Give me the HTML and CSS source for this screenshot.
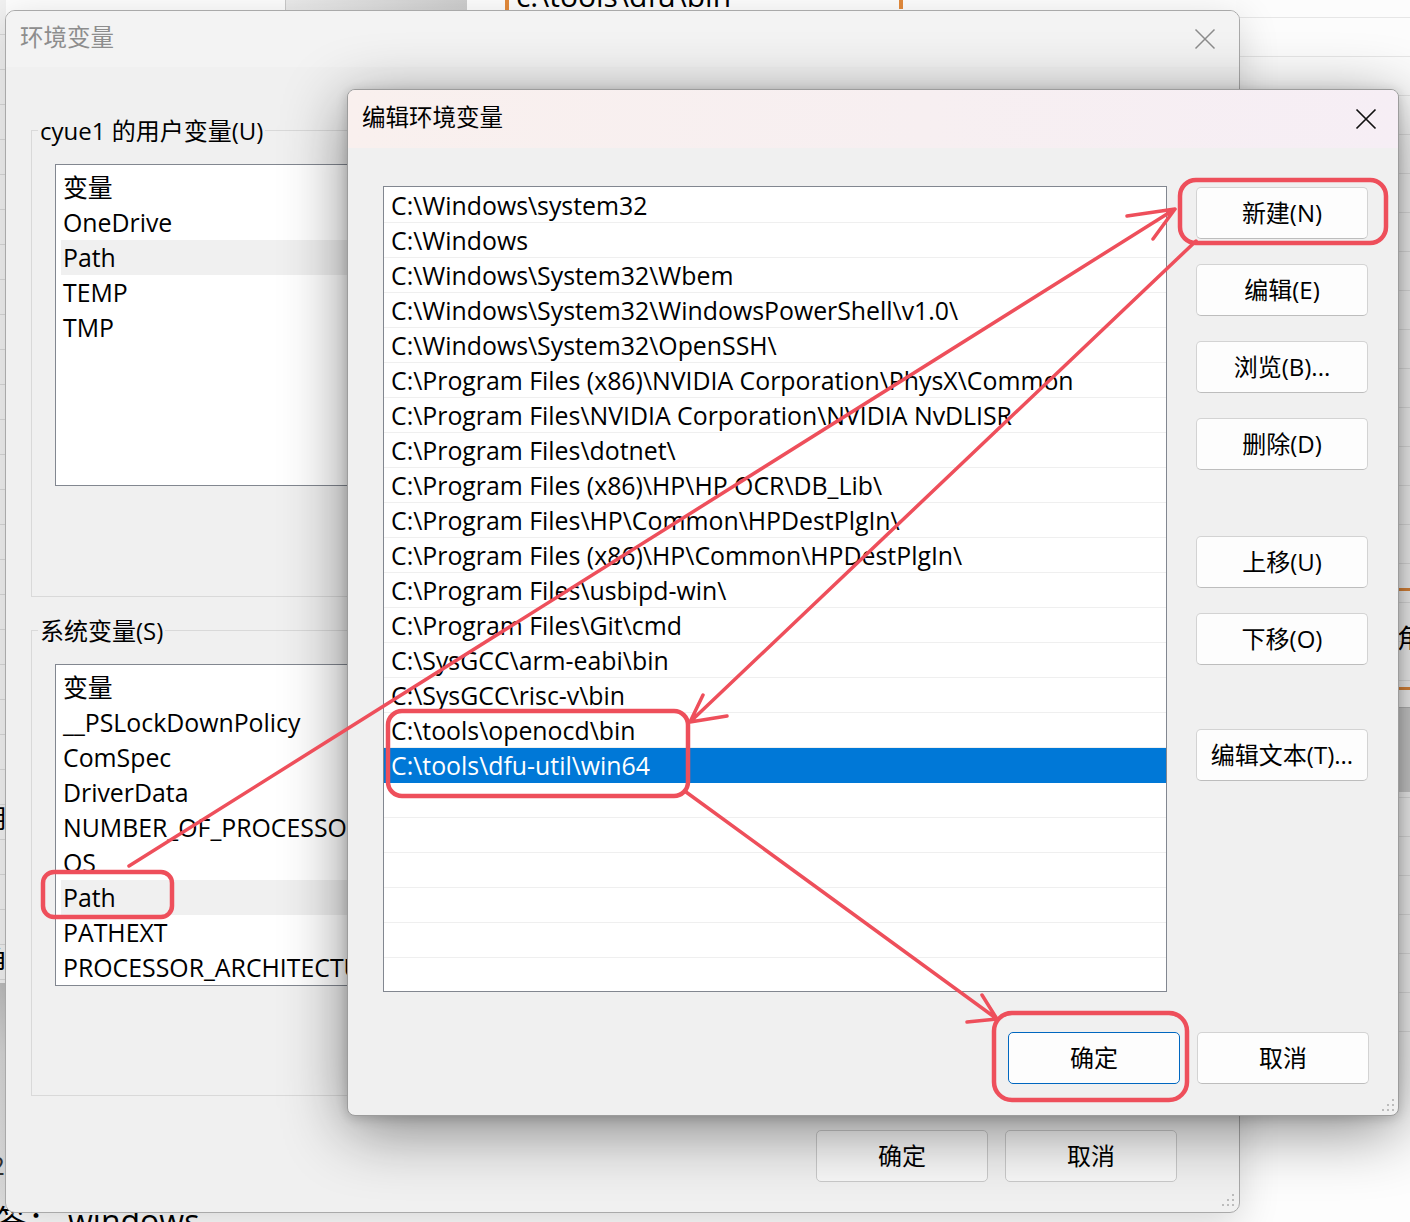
FILE: index.html
```html
<!DOCTYPE html>
<html lang="zh-CN">
<head>
<meta charset="utf-8">
<title>编辑环境变量</title>
<link rel="stylesheet" href="styles.css">
</head>
<body>
<div class="desktop">
  <div class="backdrop">
    <div class="bd-left"></div>
    <div class="bd-left-shade"></div>
    <div class="bd-right"></div>
    <div class="bd-topwin"></div>
    <div class="bd-toptext">c:\tools\dfu\bin</div>
    <div class="bd-orange bd-o1"></div>
    <div class="bd-orange bd-o2"></div>
    <div class="bd-orange bd-o3"></div>
    <div class="bd-orange bd-o4"></div>
    <div class="bd-char bd-c1">角</div>
    <div class="bd-box"></div>
    <div class="bd-char bd-c2">用</div>
    <div class="bd-char bd-c3">角</div>
    <div class="bd-char bd-c4">1</div>
    <div class="bd-char bd-c5">2</div>
    <div class="bd-bottom">答：<span class="bd-word">windows</span></div>
  </div>

  <section class="win env-win">
    <header class="titlebar env-title">
      <span class="title-text">环境变量</span>
      <svg class="close-x" viewBox="0 0 22 22" width="22" height="22"><path d="M1.5 1.5L20.5 20.5M20.5 1.5L1.5 20.5"/></svg>
    </header>
    <div class="env-body">
      <div class="group g-user">
        <div class="group-label">cyue1 的用户变量(U)</div>
        <ul class="varlist">
          <li>变量</li>
          <li>OneDrive</li>
          <li class="cur">Path</li>
          <li>TEMP</li>
          <li>TMP</li>
        </ul>
      </div>
      <div class="group g-sys">
        <div class="group-label">系统变量(S)</div>
        <ul class="varlist">
          <li>变量</li>
          <li>__PSLockDownPolicy</li>
          <li>ComSpec</li>
          <li>DriverData</li>
          <li>NUMBER_OF_PROCESSORS</li>
          <li>OS</li>
          <li class="cur">Path</li>
          <li>PATHEXT</li>
          <li>PROCESSOR_ARCHITECTURE</li>
        </ul>
      </div>
      <div class="env-actions">
        <button class="btn btn-dim">确定</button>
        <button class="btn btn-dim">取消</button>
      </div>
    </div>
    <svg class="grip grip-env" viewBox="0 0 14 14" width="14" height="14"><rect x="11" y="1" width="2" height="2"/><rect x="11" y="6" width="2" height="2"/><rect x="6" y="6" width="2" height="2"/><rect x="11" y="11" width="2" height="2"/><rect x="6" y="11" width="2" height="2"/><rect x="1" y="11" width="2" height="2"/></svg>
  </section>

  <section class="win edit-win">
    <header class="titlebar edit-title">
      <span class="title-text">编辑环境变量</span>
      <svg class="close-x dark" viewBox="0 0 22 22" width="22" height="22"><path d="M1.5 1.5L20.5 20.5M20.5 1.5L1.5 20.5"/></svg>
    </header>
    <div class="edit-body">
      <div class="edit-main">
        <ul class="pathlist">
          <li>C:\Windows\system32</li>
          <li>C:\Windows</li>
          <li>C:\Windows\System32\Wbem</li>
          <li>C:\Windows\System32\WindowsPowerShell\v1.0\</li>
          <li>C:\Windows\System32\OpenSSH\</li>
          <li>C:\Program Files (x86)\NVIDIA Corporation\PhysX\Common</li>
          <li>C:\Program Files\NVIDIA Corporation\NVIDIA NvDLISR</li>
          <li>C:\Program Files\dotnet\</li>
          <li>C:\Program Files (x86)\HP\HP OCR\DB_Lib\</li>
          <li>C:\Program Files\HP\Common\HPDestPlgIn\</li>
          <li>C:\Program Files (x86)\HP\Common\HPDestPlgIn\</li>
          <li>C:\Program Files\usbipd-win\</li>
          <li>C:\Program Files\Git\cmd</li>
          <li>C:\SysGCC\arm-eabi\bin</li>
          <li>C:\SysGCC\risc-v\bin</li>
          <li>C:\tools\openocd\bin</li>
          <li class="sel">C:\tools\dfu-util\win64</li>
          <li></li>
          <li></li>
          <li></li>
          <li></li>
          <li></li>
          <li></li>
        </ul>
        <div class="side-btns">
          <button class="btn">新建(N)</button>
          <button class="btn">编辑(E)</button>
          <button class="btn">浏览(B)...</button>
          <button class="btn">删除(D)</button>
          <button class="btn gap-a">上移(U)</button>
          <button class="btn">下移(O)</button>
          <button class="btn gap-b">编辑文本(T)...</button>
        </div>
      </div>
      <div class="edit-actions">
        <button class="btn btn-default">确定</button>
        <button class="btn">取消</button>
      </div>
    </div>
    <svg class="grip grip-edit" viewBox="0 0 14 14" width="14" height="14"><rect x="11" y="1" width="2" height="2"/><rect x="11" y="6" width="2" height="2"/><rect x="6" y="6" width="2" height="2"/><rect x="11" y="11" width="2" height="2"/><rect x="6" y="11" width="2" height="2"/><rect x="1" y="11" width="2" height="2"/></svg>
  </section>

  <svg class="annot" width="1410" height="1222" viewBox="0 0 1410 1222">
    <g fill="none" stroke="#ee4f5b" stroke-linecap="round" stroke-linejoin="round">
      <g stroke-width="4.5">
        <rect x="1180" y="180" width="206" height="63" rx="16"/>
        <rect x="43" y="872" width="129" height="45" rx="11"/>
        <rect x="388" y="711" width="300" height="85" rx="14"/>
        <rect x="994" y="1013" width="193" height="87" rx="18"/>
      </g>
      <g stroke-width="3.5">
        <path d="M129 866 L1175 209 M1127 216 L1175 209 L1153 239"/>
        <path d="M1196 241 L690 722 M703 695 L690 722 L727 716"/>
        <path d="M686 792 L997 1019 M967 1022 L997 1019 L982 995"/>
      </g>
    </g>
  </svg>
</div>
</body>
</html>
```

FILE: styles.css
```css
* { box-sizing: border-box; }
html, body { margin: 0; padding: 0; }
body {
  width: 1410px;
  height: 1222px;
  overflow: hidden;
  background: #fff;
  font-family: "Open Sans", "Noto Sans CJK SC", sans-serif;
  color: #000;
}
.desktop {
  position: relative;
  width: 1410px;
  height: 1222px;
  overflow: hidden;
  background: #fdfdfd;
}

/* ---------- background page fragments ---------- */
.bd-left {
  position: absolute; left: 0; top: 0; width: 6px; height: 1222px;
  background: repeating-linear-gradient(180deg, #f1f1f1 0 34px, #d8d8d8 34px 35px);
}
.bd-left-shade {
  position: absolute; left: 0; top: 983px; width: 6px; height: 239px;
  background: linear-gradient(180deg, #bdbdbd, #d6d6d6 30%, #e6e6e6);
}
.bd-right {
  position: absolute; left: 1236px; top: 0; width: 174px; height: 1060px;
  background: repeating-linear-gradient(180deg, #fcfcfc 0 38px, #e6e6e6 38px 39px);
  background-position: 0 -21px;
}
.bd-topwin {
  position: absolute; left: 285px; top: -30px; width: 182px; height: 40px;
  background: linear-gradient(90deg, #ebebeb, #d9d9d9 60%, #cdcdcd);
  border-left: 1px solid #c9c9c9;
}
.bd-toptext {
  position: absolute; left: 516px; top: -19px;
  font-size: 30px; line-height: 30px; white-space: nowrap;
}
.bd-orange { position: absolute; background: #e38a3c; }
.bd-o1 { left: 505px; top: 0; width: 4px; height: 10px; }
.bd-o2 { left: 899px; top: 0; width: 4px; height: 9px; }
.bd-o3 { left: 1398px; top: 588px; width: 12px; height: 3px; }
.bd-o4 { left: 1398px; top: 687px; width: 12px; height: 3px; }
.bd-char { position: absolute; font-size: 26px; line-height: 30px; font-family: "Noto Sans CJK SC", sans-serif; }
.bd-c1 { left: 1397px; top: 622px; }
.bd-box {
  position: absolute; left: 1398px; top: 707px; width: 12px; height: 85px;
  background: #d2d2d2; border-top: 1px solid #bcbcbc;
}
.bd-c2 { left: -19px; top: 802px; }
.bd-c3 { left: -19px; top: 942px; }
.bd-c4 { left: -10px; top: 1024px; font-family: "Open Sans", sans-serif; color: #333; }
.bd-c5 { left: -10px; top: 1150px; font-family: "Open Sans", sans-serif; color: #333; }
.bd-bottom {
  position: absolute; left: -4px; top: 1205px;
  font-size: 32px; line-height: 32px; white-space: nowrap;
  font-family: "Open Sans", "Noto Sans CJK SC", sans-serif;
}
.bd-word { margin-left: 8px; }

/* ---------- windows ---------- */
.win {
  position: absolute;
  background: #f0f0f0;
  display: flex;
  flex-direction: column;
  overflow: hidden;
}
.titlebar {
  display: flex;
  align-items: center;
  justify-content: space-between;
  flex: none;
  font-family: "Noto Sans CJK SC", sans-serif;
  font-size: 23.5px;
}
.title-text { margin-top: -7px; }
.close-x path { fill: none; stroke: #8c8c8c; stroke-width: 1.5; }
.close-x.dark path { stroke: #111; stroke-width: 1.7; }

.btn {
  font: inherit;
  font-size: 24px;
  width: 172px;
  height: 52px;
  line-height: 48px;
  padding: 0;
  color: #000;
  background: #fdfdfd;
  border: 1px solid #d3d3d3;
  border-bottom-color: #bdbdbd;
  border-radius: 5px;
  text-align: center;
  flex: none;
}
.btn-default { border-color: #0067c0; }
.btn-dim { background: #f7f7f7; border-color: #c9c9c9; }

.grip { position: absolute; }
.grip rect { fill: #bcbcbc; }

/* outer window */
.env-win {
  left: 5px; top: 10px; width: 1235px; height: 1203px;
  border: 1px solid #a9a9a9;
  border-radius: 10px;
  box-shadow: 0 10px 40px rgba(0, 0, 0, 0.16);
}
.env-title {
  height: 56px;
  padding: 0 23px 0 14px;
  background: #f3f3f3;
  color: #8d8d8d;
}
.env-body {
  flex: 1;
  padding: 0 62px 0 25px;
}
.group {
  border: 1px solid #d9d9d9;
  padding-left: 23px;
}
.g-user { margin-top: 63px; height: 467px; }
.g-sys { margin-top: 33px; height: 466px; }
.group-label {
  display: block;
  width: fit-content;
  margin: -16px 0 0 -17px;
  padding: 0 2px;
  background: #f0f0f0;
  font-size: 24px;
  line-height: 32px;
  height: 32px;
}
.varlist {
  list-style: none;
  margin: 17px 0 0 0;
  padding: 5px 0 0 5px;
  width: 1080px;
  height: 322px;
  overflow: hidden;
  background: #fff;
  border: 1px solid #828790;
  font-size: 24.85px;
}
.varlist li {
  height: 35px;
  line-height: 35px;
  padding-left: 2px;
  white-space: nowrap;
}
.varlist li.cur { background: #f0f0f0; }
.env-actions {
  display: flex;
  justify-content: flex-end;
  gap: 17px;
  margin-top: 34px;
}
.grip-env { right: 4px; bottom: 5px; }

/* edit dialog */
.edit-win {
  left: 347px; top: 89px; width: 1052px; height: 1027px;
  border: 1px solid #9c9c9c;
  border-radius: 8px;
  box-shadow: 0 14px 64px rgba(0, 0, 0, 0.46), 0 2px 12px rgba(0, 0, 0, 0.18);
}
.edit-title {
  height: 58px;
  padding: 0 21px 0 14px;
  background: linear-gradient(90deg, #f9f0ee, #f7eff1 55%, #f6eef5);
  color: #000;
}
.edit-body {
  flex: 1;
  display: flex;
  flex-direction: column;
  padding: 38px 29px 31px 35px;
}
.edit-main {
  display: flex;
  gap: 29px;
}
.pathlist {
  list-style: none;
  margin: 0;
  padding: 1px 0 0 0;
  width: 784px;
  height: 806px;
  overflow: hidden;
  background: #fff;
  border: 1px solid #828790;
  font-size: 24.85px;
}
.pathlist li {
  height: 35px;
  line-height: 34px;
  padding-left: 7px;
  border-bottom: 1px solid #efefef;
  white-space: nowrap;
}
.pathlist li.sel {
  background: #0078d7;
  border-bottom-color: #0078d7;
  color: #fff;
}
.side-btns {
  display: flex;
  flex-direction: column;
  padding-top: 1px;
  gap: 25px;
}
.side-btns .gap-a { margin-top: 41px; }
.side-btns .gap-b { margin-top: 39px; }
.edit-actions {
  display: flex;
  justify-content: flex-end;
  gap: 17px;
  margin-top: 40px;
}
.grip-edit { right: 3px; bottom: 3px; }

/* annotations */
.annot {
  position: absolute;
  left: 0; top: 0;
  pointer-events: none;
}
```
